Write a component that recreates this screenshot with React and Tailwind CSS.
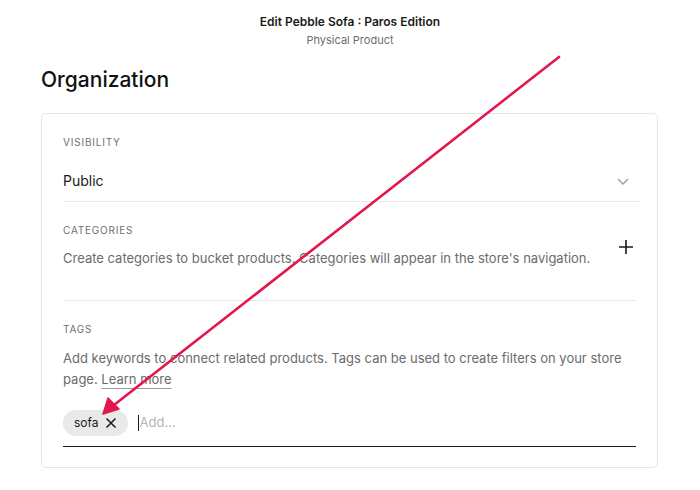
import React from "react";

const font = { fontFamily: "Inter, 'Liberation Sans', sans-serif" };

function Chevron() {
  return (
    <svg width="14" height="14" viewBox="0 0 14 14" fill="none" stroke="#9a9a9a" strokeWidth="1.3">
      <path d="M2 5l5 5 5-5" />
    </svg>
  );
}

function Plus() {
  return (
    <svg width="16" height="16" viewBox="0 0 16 16" fill="none" stroke="#1a1a1a" strokeWidth="1.6">
      <path d="M8 1v14M1 8h14" />
    </svg>
  );
}

function Cross() {
  return (
    <svg width="12" height="12" viewBox="0 0 12 12" fill="none" stroke="#1a1a1a" strokeWidth="1.5">
      <path d="M1.5 1.5l9 9M10.5 1.5l-9 9" />
    </svg>
  );
}

export default function App() {
  return (
    <div className="relative w-[700px] h-[490px] bg-white overflow-hidden" style={font}>
      {/* header */}
      <div className="flex flex-col items-center pt-[14px]">
        <div className="text-[12px] font-semibold text-[#1a1a1a] leading-[15px]">
          Edit Pebble Sofa : Paros Edition
        </div>
        <div className="text-[11px] text-[#6e6e6e] leading-[14px] mt-[4px]">Physical Product</div>
      </div>

      <div className="px-[41px]">
        <h1 className="text-[21px] font-medium text-[#111] leading-[26px] mt-[20px]">Organization</h1>

        <div className="mt-[20px] border border-[#e6e6e6] rounded-[5px] px-[21px] pt-[22px] pb-[20px] w-[617px]">
          {/* visibility */}
          <div className="text-[10px] tracking-[0.08em] text-[#6f6f6f] leading-[13px]">VISIBILITY</div>
          <div className="flex items-center justify-between mt-[23px] pr-[6px]">
            <span className="text-[14px] text-[#1a1a1a] leading-[18px]">Public</span>
            <Chevron />
          </div>
          <div className="h-px bg-[#e8e8e8] mt-[11px] mr-[-4px]" />

          {/* categories */}
          <div className="text-[10px] tracking-[0.08em] text-[#6f6f6f] leading-[13px] mt-[22px]">CATEGORIES</div>
          <div className="flex items-start justify-between mt-[11px]">
            <p className="text-[13px] text-[#6b6b6b] leading-[21px] w-[540px]">
              Create categories to bucket products. Categories will appear in the store's navigation.
            </p>
            <div className="mt-[-9px] mr-[2px]">
              <Plus />
            </div>
          </div>
          <div className="h-px bg-[#e8e8e8] mt-[31px]" />

          {/* tags */}
          <div className="text-[10px] tracking-[0.08em] text-[#6f6f6f] leading-[13px] mt-[22px]">TAGS</div>
          <p className="text-[13px] text-[#6b6b6b] leading-[21px] mt-[12px] w-[570px]">
            Add keywords to connect related products. Tags can be used to create filters on your store page.{" "}
            <span className="underline decoration-[#9a9a9a] underline-offset-[4px]">Learn more</span>
          </p>
          <div className="flex items-center mt-[20px] border-b border-[#1a1a1a] pb-[10px]">
            <div className="flex items-center gap-[6px] bg-[#e9e9e9] rounded-full h-[26px] px-[11px]">
              <span className="text-[12px] text-[#1a1a1a]">sofa</span>
              <Cross />
            </div>
            <div className="ml-[10px] flex items-center">
              <span className="w-px h-[16px] bg-[#1a1a1a]" />
              <span className="text-[13px] text-[#b5b5b5] ml-[1px]">Add...</span>
            </div>
          </div>
        </div>
      </div>

      {/* annotation arrow */}
      <svg className="absolute left-0 top-0 pointer-events-none" width="700" height="490" viewBox="0 0 700 490">
        <line x1="559" y1="57" x2="114" y2="405" stroke="#e2174a" strokeWidth="2.6" strokeLinecap="round" />
        <path d="M103 414 L108 398 L119 409 Z" fill="#e2174a" stroke="#e2174a" strokeWidth="1.5" strokeLinejoin="round" />
      </svg>
    </div>
  );
}
